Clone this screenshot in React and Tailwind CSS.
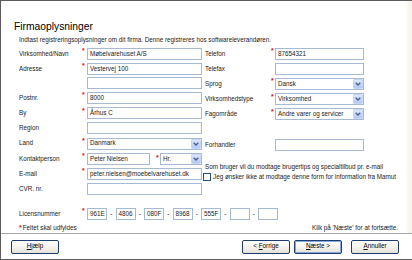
import React from "react";

const Star = ({ className = "" }) => (
  <span className={`self-start pt-[1px] text-[#e01010] text-[7px] leading-none font-bold ${className}`}>*</span>
);

const Input = ({ value = "", className = "" }) => (
  <div className={`h-[12px] border border-[#a7bad3] bg-white pl-[2px] flex items-center whitespace-nowrap overflow-hidden ${className}`}>
    {value}
  </div>
);

const Select = ({ value, className = "" }) => (
  <div className={`h-[12px] border border-[#a7bad3] bg-white flex items-center ${className}`}>
    <span className="flex-1 pl-[2px] whitespace-nowrap overflow-hidden">{value}</span>
    <span className="w-[10px] h-[10px] flex items-center justify-center rounded-[1px] border border-[#c8d6f6] bg-gradient-to-b from-[#dde7fc] to-[#b4c8f4]">
      <svg width="6" height="4" viewBox="0 0 6 4">
        <path d="M0.7 0.7 L3 3 L5.3 0.7" stroke="#4a5f8c" strokeWidth="1.3" fill="none" />
      </svg>
    </span>
  </div>
);

// venstre kolonne: label 63px, stjerne 5px, felt 115px
const LeftRow = ({ label, req, children, h = "h-[15.2px]" }) => (
  <div className={`flex items-center ${h}`}>
    <span className="w-[63px] whitespace-nowrap">{label}</span>
    {req ? <Star className="w-[5px]" /> : <span className="w-[5px]" />}
    <div className="flex-1 flex items-center">{children}</div>
  </div>
);

// højre kolonne: label 66px, stjerne 4px, felt 89px
const RightRow = ({ label, req, children }) => (
  <div className="flex items-center h-[15.2px]">
    <span className="w-[66px] whitespace-nowrap">{label}</span>
    {req ? <Star className="w-[4px]" /> : <span className="w-[4px]" />}
    <div className="w-[89px] flex items-center">{children}</div>
  </div>
);

const Btn = ({ children, focus }) => (
  <div
    className={`w-[48px] h-[14px] rounded-[2px] border border-[#1c3d6e] bg-gradient-to-b from-white via-[#f5f4ef] to-[#e3e1d6] flex items-center justify-center ${
      focus ? "shadow-[inset_0_0_0_1px_#86a8e3]" : ""
    }`}
  >
    {children}
  </div>
);

const licens = ["961E", "4806", "080F", "8968", "555F", "", ""];

export default function App() {
  return (
    <div className="w-[412px] h-[260px] bg-white border-t border-l border-b border-[#5c5c5c] flex flex-col overflow-hidden font-['Liberation_Sans',Arial,sans-serif] text-[6.3px] leading-none text-[#1a1a1a]">
      <div className="h-[232px] flex">
        <div className="flex-1 pl-[13px] pt-[21px] pr-[1px]">
          <h1 className="text-[10.3px] leading-none text-black">Firmaoplysninger</h1>

          <div className="pl-[5px]">
            <p className="mt-[5px]">
              Indtast registreringsoplysninger om dit firma. Denne registreres hos softwareleverandøren.
            </p>

            <div className="flex gap-[3px] mt-[2.5px]">
              <div className="w-[183px] flex flex-col">
                <LeftRow label="Virksomhed/Navn" req>
                  <Input className="flex-1" value="Møbelvarehuset A/S" />
                </LeftRow>
                <LeftRow label="Adresse" req>
                  <Input className="flex-1" value="Vestervej 100" />
                </LeftRow>
                <LeftRow label="" h="h-[14px]">
                  <Input className="flex-1 self-start" />
                </LeftRow>
                <LeftRow label="Postnr." req>
                  <Input className="flex-1" value="8000" />
                </LeftRow>
                <LeftRow label="By" req>
                  <Input className="flex-1" value="Århus C" />
                </LeftRow>
                <LeftRow label="Region">
                  <Input className="flex-1" />
                </LeftRow>
                <LeftRow label="Land" req>
                  <Select className="flex-1" value="Danmark" />
                </LeftRow>
                <LeftRow label="Kontaktperson" req>
                  <Input className="w-[63px]" value="Peter Nielsen" />
                  <span className="w-[6px]" />
                  <Star className="w-[4px]" />
                  <Select className="flex-1" value="Hr." />
                </LeftRow>
                <LeftRow label="E-mail" req>
                  <Input className="flex-1" value="peter.nielsen@moebelvarehuset.dk" />
                </LeftRow>
                <LeftRow label="CVR. nr.">
                  <Input className="flex-1" />
                </LeftRow>
              </div>

              <div className="flex flex-col">
                <RightRow label="Telefon" req>
                  <Input className="flex-1" value="87654321" />
                </RightRow>
                <RightRow label="Telefax">
                  <Input className="flex-1" />
                </RightRow>
                <RightRow label="Sprog" req>
                  <Select className="flex-1" value="Dansk" />
                </RightRow>
                <RightRow label="Virksomhedstype" req>
                  <Select className="flex-1" value="Virksomhed" />
                </RightRow>
                <RightRow label="Fagområde" req>
                  <Select className="flex-1" value="Andre varer og servicer" />
                </RightRow>
                <div className="h-[15.2px]" />
                <RightRow label="Forhandler">
                  <Input className="flex-1" />
                </RightRow>
                <p className="mt-[11.5px] whitespace-nowrap">
                  Som bruger vil du modtage brugertips og specialtilbud pr. e-mail
                </p>
                <div className="flex items-center gap-[2px] mt-[2.5px] -ml-[2px] whitespace-nowrap">
                  <span className="w-[8px] h-[8px] border border-[#1d5281] bg-white" />
                  <span>Jeg ønsker ikke at modtage denne form for information fra Mamut</span>
                </div>
              </div>
            </div>

            <div className="flex items-center h-[15.2px] mt-[9.6px]">
              <span className="w-[63px]">Licensnummer</span>
              <Star className="w-[5px]" />
              {licens.map((v, i) => (
                <React.Fragment key={i}>
                  {i > 0 && <span className="w-[8.5px] text-center">-</span>}
                  <Input className="w-[20px]" value={v} />
                </React.Fragment>
              ))}
            </div>

            <div className="flex items-center justify-between mt-[2.5px] pr-[6px]">
              <span className="flex items-start">
                <span className="text-[#e01010] text-[7px] font-bold pr-px">*</span>
                <span className="pt-[1px]">Feltet skal udfyldes</span>
              </span>
              <span className="pt-[1px]">Klik på 'Næste' for at fortsætte.</span>
            </div>
          </div>
        </div>
        <div className="w-[7px] bg-gradient-to-r from-white to-[#f4f2e2]" />
      </div>

      <div className="h-px bg-[#a8a8a8]" />

      <div className="h-[25px] flex items-center justify-between pl-[10px] pr-[13px] text-black">
        <Btn>
          <span><u>H</u>jælp</span>
        </Btn>
        <div className="flex items-center">
          <Btn>
            <span>&lt; <u>F</u>orrige</span>
          </Btn>
          <div className="ml-[4px]">
            <Btn focus>
              <span><u>N</u>æste &gt;</span>
            </Btn>
          </div>
          <div className="ml-[9px]">
            <Btn>
              <span><u>A</u>nnuller</span>
            </Btn>
          </div>
        </div>
      </div>
    </div>
  );
}
